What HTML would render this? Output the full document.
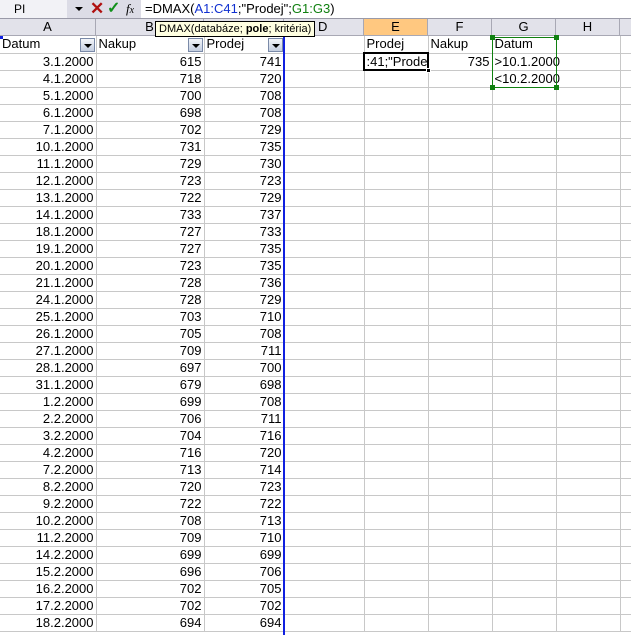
<!DOCTYPE html>
<html><head><meta charset="utf-8"><style>
*{margin:0;padding:0;box-sizing:border-box}
body{width:631px;height:635px;overflow:hidden;background:#fff;font-family:"Liberation Sans",Arial,sans-serif;font-size:13px;position:relative}
.fb{position:absolute;left:0;top:0;width:631px;height:19px;background:#fff;border-bottom:1px solid #9a9aa8}
.nb{position:absolute;left:0;top:0;width:67px;height:18px;background:#f2f2f6;padding-left:14px;line-height:18px;font-size:12px}
.nd{position:absolute;left:67px;top:0;width:74px;height:18px;background:#dcdce6}
.hdr{position:absolute;top:19px;height:17px;background:#e2e2ea;border-right:1px solid #a8a8b4;border-bottom:1px solid #a8a8b4;text-align:center;line-height:16px;font-size:13px}
table{position:absolute;left:0;top:36px;border-collapse:collapse;table-layout:fixed;width:631px}
td{height:17px;border-right:1px solid #c8c8c8;border-bottom:1px solid #c8c8c8;padding:0 2px;white-space:nowrap;overflow:hidden;line-height:16px}
td.r{text-align:right}
td.v{overflow:visible}
.dd{display:inline-block;width:15px;height:14px;border:1px solid #7a8aa8;background:linear-gradient(#f4f6fa,#c4cee0);position:absolute}
.dd:after{content:"";position:absolute;left:3px;top:5px;border-left:4px solid transparent;border-right:4px solid transparent;border-top:4px solid #000}
</style></head><body>
<div class="fb">
<div class="nb">PI</div>
<div class="nd">
<div style="position:absolute;left:8px;top:7px;border-left:4px solid transparent;border-right:4px solid transparent;border-top:4px solid #000"></div>
<div style="position:absolute;left:23px;top:0;color:#b01010;font-size:17px;font-weight:bold;line-height:18px">✕</div>
<div style="position:absolute;left:40px;top:0;color:#10901a;font-size:16px;font-weight:bold;line-height:18px">✓</div>
<div style="position:absolute;left:59px;top:0;font-family:'Liberation Serif',serif;font-style:italic;font-size:13px;line-height:18px">f<span style="font-size:10px">x</span></div>
</div>
<div style="position:absolute;left:145px;top:0;line-height:18px;font-size:13px">=DMAX(<span style="color:#1030d0">A1:C41</span>;"Prodej";<span style="color:#108010">G1:G3</span>)</div>
</div>
<div class="hdr" style="left:0;width:96px">A</div>
<div class="hdr" style="left:96px;width:108px">B</div>
<div class="hdr" style="left:204px;width:80px">C</div>
<div class="hdr" style="left:284px;width:80px;text-align:left;padding-left:34px">D</div>
<div class="hdr" style="left:364px;width:64px;background:#ffc880">E</div>
<div class="hdr" style="left:428px;width:64px">F</div>
<div class="hdr" style="left:492px;width:64px">G</div>
<div class="hdr" style="left:556px;width:64px">H</div>
<div class="hdr" style="left:620px;width:11px;border-right:none"></div>
<div style="position:absolute;left:155px;top:21px;height:16px;background:#ffffe1;border:1px solid #000;font-size:11px;line-height:14px;padding:0 3px;z-index:5">DMAX(databáze; <b>pole</b>; kritéria)</div>
<table>
<colgroup><col style="width:96px"><col style="width:108px"><col style="width:80px"><col style="width:80px"><col style="width:64px"><col style="width:64px"><col style="width:64px"><col style="width:64px"><col style="width:11px"></colgroup>
<tr><td>Datum</td><td>Nakup</td><td>Prodej</td><td></td><td>Prodej</td><td>Nakup</td><td>Datum</td><td></td><td></td></tr>
<tr><td class="r">3.1.2000</td><td class="r">615</td><td class="r">741</td><td></td><td>:41;"Prodej</td><td class="r">735</td><td class="v">&gt;10.1.2000</td><td></td><td></td></tr>
<tr><td class="r">4.1.2000</td><td class="r">718</td><td class="r">720</td><td></td><td></td><td></td><td class="v">&lt;10.2.2000</td><td></td><td></td></tr>
<tr><td class="r">5.1.2000</td><td class="r">700</td><td class="r">708</td><td></td><td></td><td></td><td></td><td></td><td></td></tr>
<tr><td class="r">6.1.2000</td><td class="r">698</td><td class="r">708</td><td></td><td></td><td></td><td></td><td></td><td></td></tr>
<tr><td class="r">7.1.2000</td><td class="r">702</td><td class="r">729</td><td></td><td></td><td></td><td></td><td></td><td></td></tr>
<tr><td class="r">10.1.2000</td><td class="r">731</td><td class="r">735</td><td></td><td></td><td></td><td></td><td></td><td></td></tr>
<tr><td class="r">11.1.2000</td><td class="r">729</td><td class="r">730</td><td></td><td></td><td></td><td></td><td></td><td></td></tr>
<tr><td class="r">12.1.2000</td><td class="r">723</td><td class="r">723</td><td></td><td></td><td></td><td></td><td></td><td></td></tr>
<tr><td class="r">13.1.2000</td><td class="r">722</td><td class="r">729</td><td></td><td></td><td></td><td></td><td></td><td></td></tr>
<tr><td class="r">14.1.2000</td><td class="r">733</td><td class="r">737</td><td></td><td></td><td></td><td></td><td></td><td></td></tr>
<tr><td class="r">18.1.2000</td><td class="r">727</td><td class="r">733</td><td></td><td></td><td></td><td></td><td></td><td></td></tr>
<tr><td class="r">19.1.2000</td><td class="r">727</td><td class="r">735</td><td></td><td></td><td></td><td></td><td></td><td></td></tr>
<tr><td class="r">20.1.2000</td><td class="r">723</td><td class="r">735</td><td></td><td></td><td></td><td></td><td></td><td></td></tr>
<tr><td class="r">21.1.2000</td><td class="r">728</td><td class="r">736</td><td></td><td></td><td></td><td></td><td></td><td></td></tr>
<tr><td class="r">24.1.2000</td><td class="r">728</td><td class="r">729</td><td></td><td></td><td></td><td></td><td></td><td></td></tr>
<tr><td class="r">25.1.2000</td><td class="r">703</td><td class="r">710</td><td></td><td></td><td></td><td></td><td></td><td></td></tr>
<tr><td class="r">26.1.2000</td><td class="r">705</td><td class="r">708</td><td></td><td></td><td></td><td></td><td></td><td></td></tr>
<tr><td class="r">27.1.2000</td><td class="r">709</td><td class="r">711</td><td></td><td></td><td></td><td></td><td></td><td></td></tr>
<tr><td class="r">28.1.2000</td><td class="r">697</td><td class="r">700</td><td></td><td></td><td></td><td></td><td></td><td></td></tr>
<tr><td class="r">31.1.2000</td><td class="r">679</td><td class="r">698</td><td></td><td></td><td></td><td></td><td></td><td></td></tr>
<tr><td class="r">1.2.2000</td><td class="r">699</td><td class="r">708</td><td></td><td></td><td></td><td></td><td></td><td></td></tr>
<tr><td class="r">2.2.2000</td><td class="r">706</td><td class="r">711</td><td></td><td></td><td></td><td></td><td></td><td></td></tr>
<tr><td class="r">3.2.2000</td><td class="r">704</td><td class="r">716</td><td></td><td></td><td></td><td></td><td></td><td></td></tr>
<tr><td class="r">4.2.2000</td><td class="r">716</td><td class="r">720</td><td></td><td></td><td></td><td></td><td></td><td></td></tr>
<tr><td class="r">7.2.2000</td><td class="r">713</td><td class="r">714</td><td></td><td></td><td></td><td></td><td></td><td></td></tr>
<tr><td class="r">8.2.2000</td><td class="r">720</td><td class="r">723</td><td></td><td></td><td></td><td></td><td></td><td></td></tr>
<tr><td class="r">9.2.2000</td><td class="r">722</td><td class="r">722</td><td></td><td></td><td></td><td></td><td></td><td></td></tr>
<tr><td class="r">10.2.2000</td><td class="r">708</td><td class="r">713</td><td></td><td></td><td></td><td></td><td></td><td></td></tr>
<tr><td class="r">11.2.2000</td><td class="r">709</td><td class="r">710</td><td></td><td></td><td></td><td></td><td></td><td></td></tr>
<tr><td class="r">14.2.2000</td><td class="r">699</td><td class="r">699</td><td></td><td></td><td></td><td></td><td></td><td></td></tr>
<tr><td class="r">15.2.2000</td><td class="r">696</td><td class="r">706</td><td></td><td></td><td></td><td></td><td></td><td></td></tr>
<tr><td class="r">16.2.2000</td><td class="r">702</td><td class="r">705</td><td></td><td></td><td></td><td></td><td></td><td></td></tr>
<tr><td class="r">17.2.2000</td><td class="r">702</td><td class="r">702</td><td></td><td></td><td></td><td></td><td></td><td></td></tr>
<tr><td class="r">18.2.2000</td><td class="r">694</td><td class="r">694</td><td></td><td></td><td></td><td></td><td></td><td></td></tr>
</table>
<div class="dd" style="left:80px;top:38px"></div>
<div class="dd" style="left:188px;top:38px"></div>
<div class="dd" style="left:268px;top:38px"></div>
<div style="position:absolute;left:283px;top:36px;width:2px;height:599px;background:#1020e0"></div>
<div style="position:absolute;left:0;top:36px;width:3px;height:3px;background:#1020e0"></div>
<div style="position:absolute;left:363px;top:52px;width:66px;height:19px;border:2px solid #000"></div>
<div style="position:absolute;left:492px;top:37px;width:65px;height:51px;border:1px solid #108010"></div>
<div style="position:absolute;left:490px;top:35px;width:5px;height:5px;background:#108010"></div>
<div style="position:absolute;left:554px;top:35px;width:5px;height:5px;background:#108010"></div>
<div style="position:absolute;left:490px;top:85px;width:5px;height:5px;background:#108010"></div>
<div style="position:absolute;left:554px;top:85px;width:5px;height:5px;background:#108010"></div>
<div style="position:absolute;left:426px;top:68px;width:5px;height:5px;background:#000;border:1px solid #fff"></div>
</body></html>
